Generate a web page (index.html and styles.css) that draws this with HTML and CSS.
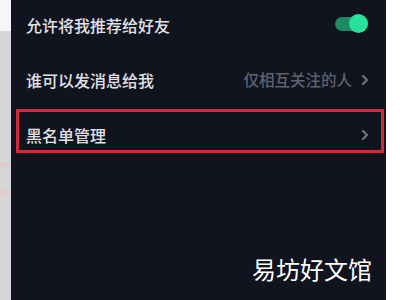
FILE: index.html
```html
<!DOCTYPE html>
<html lang="zh-CN">

<head>
    <meta charset="UTF-8">
    <meta name="viewport" content="width=device-width, initial-scale=1.0">
    <link rel="stylesheet" href="styles.css">
    <title>隐私设置</title>
</head>

<body>
    <div class="page">
        <div class="edge"></div>

        <div class="panel">
            <div class="row first">
                <span class="label">允许将我推荐给好友</span>
                <div class="switch on"><span class="knob"></span></div>
            </div>

            <div class="row second">
                <span class="label">谁可以发消息给我</span>
                <div class="value">
                    <span>仅相互关注的人</span>
                    <svg class="chevron" viewBox="0 0 6 10" width="6" height="10">
                        <polyline points="1,1 5,5 1,9" />
                    </svg>
                </div>
            </div>

            <div class="row marked">
                <span class="label">黑名单管理</span>
                <div class="value">
                    <svg class="chevron" viewBox="0 0 6 10" width="6" height="10">
                        <polyline points="1,1 5,5 1,9" />
                    </svg>
                </div>
            </div>

            <div class="watermark">易坊好文馆</div>
        </div>

        <div class="side"></div>
    </div>
</body>

</html>
```

FILE: styles.css
```css
* {
    margin: 0;
    padding: 0;
    box-sizing: border-box;
}

body {
    font-family: "Noto Sans CJK SC", "Noto Sans", sans-serif;
    background: #fff;
}

.page {
    display: flex;
    height: 300px;
    width: 400px;
    overflow: hidden;
}

.edge {
    width: 11px;
    flex-shrink: 0;
    background: linear-gradient(to bottom,
            #f6f6f6 0, #f6f6f6 31px,
            #d6d6d6 31px, #d6d6d6 162px,
            #e2c9cb 164px, #d6d6d6 170px,
            #d6d6d6 189px, #e2c9cb 192px, #d6d6d6 197px,
            #d6d6d6 100%);
}

.panel {
    position: relative;
    width: 375px;
    flex-shrink: 0;
    background: #11131f;
}

.side {
    flex: 1;
    background: #fff;
}

.row {
    display: flex;
    justify-content: space-between;
    align-items: center;
    padding: 0 18px 0 15px;
    font-size: 16px;
    line-height: 1;
}

.row.first {
    height: 50px;
}

.row.second {
    height: 59px;
}

.row.marked {
    height: 44px;
    margin: 0 2px 0 5px;
    padding: 7px 13px 0 7px;
    border: 3px solid #d22a3b;
}

.label {
    color: #e2e2e6;
    font-weight: 500;
}

.value {
    display: flex;
    align-items: center;
    gap: 10px;
    color: #5f626d;
    font-size: 15.5px;
    font-weight: 500;
}

.chevron {
    fill: none;
    stroke: #71747e;
    stroke-width: 2.1;
    stroke-linecap: round;
    stroke-linejoin: round;
}

.switch {
    display: flex;
    align-items: center;
    justify-content: flex-end;
    width: 33px;
    height: 14px;
    margin-top: -3px;
    border-radius: 7px;
    background: #1c8a63;
}

.knob {
    width: 19px;
    height: 19px;
    flex-shrink: 0;
    border-radius: 50%;
    background: #26e09b;
}

.watermark {
    position: absolute;
    right: 14px;
    bottom: 19px;
    color: #fff;
    font-size: 24px;
    line-height: 1;
}
```
